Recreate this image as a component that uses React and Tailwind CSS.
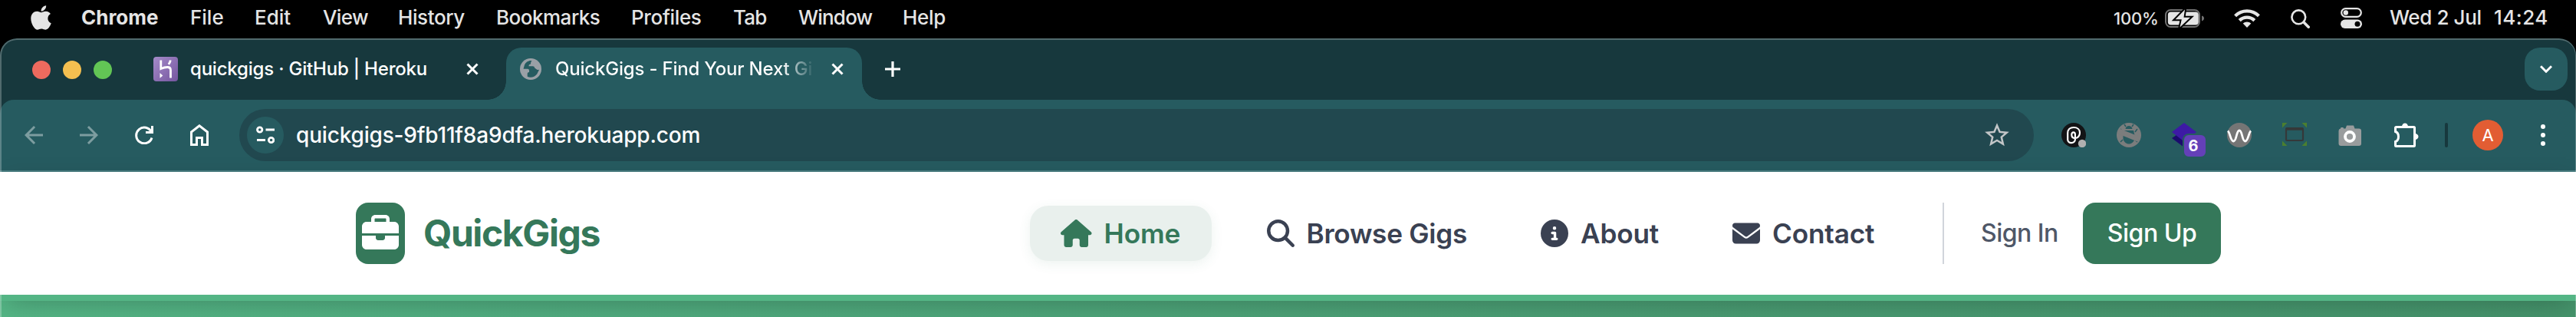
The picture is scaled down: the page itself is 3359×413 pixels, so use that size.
import React from 'react';
import { FaApple } from 'react-icons/fa';
import { FaBriefcase, FaHouse, FaMagnifyingGlass, FaCircleInfo, FaEnvelope } from 'react-icons/fa6';
import { MdArrowBack, MdArrowForward, MdStarBorder } from 'react-icons/md';

function Battery() {
  return (
    <svg className="h-6 w-[51px] shrink-0" viewBox="0 0 51 24" fill="none">
      <rect x="1" y="1" width="44" height="22" rx="6.5" stroke="#727272" strokeWidth="2" />
      <rect x="3.8" y="3.6" width="40" height="16.8" rx="4" fill="#e5e5e5" />
      <path d="M48 8.6c2 .6 3 1.800 3 3.400s-1 2.800-3 3.400z" fill="#727272" />
      <path d="M26 .5L13.500 13.200h8.300L19.500 23.500 33 10.800h-8.500z" fill="#e5e5e5" stroke="#000" strokeWidth="4" />
      <path d="M26 .5L13.500 13.200h8.300L19.500 23.500 33 10.800h-8.500z" fill="#e5e5e5" />
    </svg>
  );
}

function Wifi() {
  return (
    <svg className="h-[25px] w-[34px] shrink-0" viewBox="0 0 34 25" fill="none" stroke="#e5e5e5" strokeWidth="4.300">
      <path d="M1.600 9.700a22 22 0 0 1 30.800 0" />
      <path d="M7.200 15.600a14 14 0 0 1 19.600 0" />
      <path d="M17 25l-5.300-5.400a7.600 7.600 0 0 1 10.600 0z" fill="#e5e5e5" stroke="none" />
    </svg>
  );
}

function ControlCenter() {
  return (
    <svg className="h-[27px] w-7 shrink-0" viewBox="0 0 28 27" fill="none">
      <rect x="1.200" y="1.200" width="25.600" height="10.600" rx="5.300" stroke="#e5e5e5" strokeWidth="2.200" />
      <circle cx="6.800" cy="6.500" r="3.200" fill="#e5e5e5" />
      <rect y="15.500" width="28" height="11.500" rx="5.700" fill="#e5e5e5" />
      <circle cx="22" cy="21.200" r="3.500" fill="#000" />
    </svg>
  );
}

function MenuBar() {
  return (
    <div className="flex h-[50px] items-center bg-black pb-[5px] pl-10 text-[26px] font-medium whitespace-nowrap text-[#e5e5e5]">
      <FaApple className="h-9 w-[27px] shrink-0" />
      <span className="ml-[39px] w-[142px] font-bold">Chrome</span>
      <span className="w-[84px]">File</span>
      <span className="w-[89px]">Edit</span>
      <span className="w-[98px] tracking-[-0.6px]">View</span>
      <span className="w-[128px] tracking-[-0.4px]">History</span>
      <span className="w-[176px] tracking-[-0.5px]">Bookmarks</span>
      <span className="w-[133px] tracking-[-0.35px]">Profiles</span>
      <span className="w-[85px] tracking-[-0.8px]">Tab</span>
      <span className="w-[136px] tracking-[-0.8px]">Window</span>
      <span className="tracking-[-0.3px]">Help</span>
      <div className="ml-auto flex w-[603px] items-center">
        <span className="mt-[3px] w-[67px] text-[22px] tracking-[-0.2px]">100%</span>
        <div className="mt-[3px]"><Battery /></div>
        <div className="mt-[2px] ml-[39px]"><Wifi /></div>
        <svg className="mt-[3px] ml-10 h-[25px] w-[25px] shrink-0" viewBox="0 0 25 25" fill="none" stroke="#e5e5e5">
          <circle cx="10.300" cy="10.300" r="8.900" strokeWidth="2.600" />
          <path d="M17 17l6.200 6.200" strokeWidth="3.600" strokeLinecap="round" />
        </svg>
        <div className="mt-[2px] ml-10"><ControlCenter /></div>
        <span className="ml-9 w-[136px] tracking-[-0.4px]">Wed 2 Jul</span>
        <span className="tracking-[0.5px]">14:24</span>
      </div>
    </div>
  );
}

function Close({ className = '' }) {
  return (
    <svg className={`h-4 w-4 shrink-0 ${className}`} viewBox="0 0 16 16" stroke="#fff" strokeWidth="3" fill="none">
      <path d="M1.500 1.500l13 13M14.500 1.500l-13 13" />
    </svg>
  );
}

function HerokuIcon() {
  return (
    <svg className="ml-[54px] h-8 w-8 shrink-0" viewBox="0 0 32 32" fill="none">
      <defs>
        <linearGradient id="heroku" x1="0" y1="0" x2="1" y2="1">
          <stop offset="0" stopColor="#a58bc9" />
          <stop offset="1" stopColor="#75569f" />
        </linearGradient>
      </defs>
      <rect width="32" height="32" rx="4" fill="url(#heroku)" />
      <path d="M9.800 4.500v11c3-1.300 6-2 8.500-2 3 0 4.200 1.500 4.200 4V27.500" stroke="#fff" strokeWidth="2.800" />
      <path d="M22.300 4.500c-.3 2-1.200 3.700-2.600 5.200" stroke="#fff" strokeWidth="2.800" />
      <path d="M8.500 21l3.800 3.400-3.800 3.300z" fill="#fff" />
    </svg>
  );
}

function TabStrip() {
  return (
    <div className="flex h-[78px] bg-[#17383d] pr-[11px] pl-[42px] text-[24px] font-medium whitespace-nowrap text-white">
      <div className="flex items-center gap-4">
        <span className="h-6 w-6 rounded-full bg-[#ed6a5e]" />
        <span className="h-6 w-6 rounded-full bg-[#f4bf50]" />
        <span className="h-6 w-6 rounded-full bg-[#62c555]" />
      </div>
      <div className="flex items-center pb-[2px]">
        <HerokuIcon />
        <span className="ml-4 w-[360px] tracking-[-0.2px]">quickgigs · GitHub | Heroku</span>
        <Close />
      </div>
      <div className="ml-3 flex items-end">
        <span className="h-6 w-6 bg-[radial-gradient(circle_at_0_0,transparent_23.5px,#265b60_24px)]" />
        <div className="flex h-[68px] w-[464px] items-center rounded-t-[20px] bg-[#265b60] pb-3 pl-[18px]">
          <svg className="h-7 w-7 shrink-0" viewBox="0 0 28 28">
            <circle cx="14" cy="14" r="14" fill="#9aa0a6" />
            <path
              d="M15.500 3C11 2.500 7.500 5 6 8.500L4.500 13.800H10c1.500 0 2 1 2 2v2.200c-1.800 0-2.300 1-2.300 2.500v3.300c4 2.200 9.500.7 12.500-3.300l3-6c-1.800.9-3 .5-4-.5l-2-1.500c-.3-1.500-1-2.200-2.500-2.200H11.500c0-2 .8-2.800 2.500-2.800.2-2 .2-3.300 1.500-4.500z"
              fill="#265b60"
            />
          </svg>
          <span className="ml-[18px] w-[336px] overflow-hidden bg-[linear-gradient(90deg,#fff_296px,transparent_338px)] bg-clip-text tracking-[-0.2px] text-transparent">
            QuickGigs - Find Your Next Gi
          </span>
          <Close className="ml-6" />
        </div>
        <span className="h-6 w-6 bg-[radial-gradient(circle_at_100%_0,transparent_23.5px,#265b60_24px)]" />
      </div>
      <div className="flex grow items-center justify-between pb-[2px] pl-[6px]">
        <svg className="h-5 w-5" viewBox="0 0 20 20" stroke="#fff" strokeWidth="3.200">
          <path d="M10 0v20M0 10h20" />
        </svg>
        <span className="flex h-14 w-14 items-center justify-center rounded-[20px] bg-[#265b60]">
          <svg className="h-[10px] w-4" viewBox="0 0 16 10" fill="none" stroke="#fff" strokeWidth="3">
            <path d="M1 1.200l7 7 7-7" />
          </svg>
        </span>
      </div>
    </div>
  );
}

function Extensions() {
  return (
    <div className="ml-9 flex items-center gap-10">
      <svg className="h-8 w-8" viewBox="0 0 32 32" fill="none">
        <circle cx="16" cy="16" r="16" fill="#131416" />
        <path
          d="M8.200 22V13.500C8.200 8.500 11.500 6 16 6c5 0 8 3 8 7s-2.700 7-6.200 7c-3 0-4.500-2-4.500-4.500 0-2 1-3.200 2.400-3.200s2.200 1 2.200 2.700v6.500c0 6-9.700 6-9.700.5z"
          stroke="#fff"
          strokeWidth="2.200"
        />
        <circle cx="27" cy="27" r="5.200" fill="#b0b0b0" />
      </svg>
      <svg className="h-8 w-8" viewBox="0 0 32 32" fill="none">
        <circle cx="16" cy="16" r="16" fill="#7b7d7d" />
        <path d="M11.500 8c.5-3 2.500-4 4.500-4s4 1 4.500 4zM10 10h12l1.500 6v5c-1 4-4 6.500-7.500 6.500S9.500 25 8.500 21v-5z" fill="#265b60" />
        <path d="M12 5l-2-3M20 5l2-3M8 12L5 8M24 12l3-4M8 22l-3 3M24 22l3 3" stroke="#265b60" strokeWidth="1.500" />
        <path d="M3 11l26 10.500" stroke="#7b7d7d" strokeWidth="7" />
      </svg>
      <div className="relative h-8 w-8">
        <svg className="h-8 w-8" viewBox="0 0 32 32">
          <path d="M0 20l16-11 16 11-16 12z" fill="#1b0b6e" />
          <path d="M0 12L16 0l16 12-16 12.500z" fill="#3d1aa5" />
        </svg>
        <span className="absolute top-[14px] left-[14px] flex h-8 w-8 items-center justify-center rounded-[8px] border-2 border-[#265b60] bg-[#6440b8] pr-1 text-[20px] leading-none font-bold text-white">
          6
        </span>
      </div>
      <svg className="h-8 w-8" viewBox="0 0 32 32" fill="none">
        <circle cx="16" cy="16" r="16" fill="#757575" />
        <path d="M1 10.500C4 13 4.500 24 8.500 24S12 10 16 10s3.500 14 7.500 14S28 13 31 10.500" stroke="#fff" strokeWidth="2.800" />
      </svg>
      <svg className="h-8 w-8" viewBox="0 1 32 32" fill="none">
        <path d="M0 1h6.500L0 7.500zM32 1v6.500L25.500 1zM0 31v-6.500L6.500 31zM32 31h-6.500l6.500-6.500z" fill="#4b7f2f" />
        <rect x="5" y="8" width="22" height="16" rx="1" stroke="#353839" strokeWidth="2.200" />
        <path d="M5 9h22" stroke="#353839" strokeWidth="3.600" />
      </svg>
      <svg className="h-8 w-8" viewBox="0 0 32 32" fill="none">
        <path d="M10.500 7.500l1.500-4h9l1.500 4H28a3 3 0 0 1 3 3V27a3 3 0 0 1-3 3H4.500a3 3 0 0 1-3-3V10.500a3 3 0 0 1 2.500-3l.5-1.500h3l.5 1.500z" fill="#999c9d" />
        <circle cx="16" cy="18" r="6" fill="#999c9d" stroke="#fff" strokeWidth="3.800" />
      </svg>
      <svg className="h-8 w-[34px]" viewBox="-2 0 34 32" fill="none">
        <path
          d="M3 5.500h22.500a1 1 0 0 1 1 1V29.500a1 1 0 0 1-1 1H2.500a1 1 0 0 1-1-1V24.500c2.700-.8 4-3.200 4-6.500s-1.300-5.700-4-6.500V6.500a1 1 0 0 1 1-1z"
          stroke="#fff"
          strokeWidth="3"
        />
        <path d="M10 5a4 4.500 0 0 1 8 0zM27 14a4.500 4 0 0 1 0 8z" fill="#fff" />
      </svg>
    </div>
  );
}

function Toolbar() {
  return (
    <div className="bg-[#17383d]">
      <div className="flex h-[94px] items-center rounded-t-[18px] border-b-2 border-[#4d8084] bg-[#265b60] pl-[26px] text-white">
        <MdArrowBack className="h-9 w-9 text-[#7d9da0]" />
        <MdArrowForward className="ml-9 h-9 w-9 text-[#7d9da0]" />
        <svg className="ml-[42px] h-6 w-6" viewBox="0 0 24 24" fill="none" stroke="#fff" strokeWidth="3">
          <path d="M21.500 8A10.400 10.400 0 1 0 22 15.500" />
          <path d="M22.500 0v8.500H14" />
        </svg>
        <svg className="ml-12 h-7 w-6" viewBox="0 0 24 28" fill="none" stroke="#fff" strokeWidth="3">
          <path d="M1.500 26.500V10L12 1.800 22.500 10v16.500h-7V17.500h-7v9z" />
        </svg>
        <div className="ml-10 flex h-[68px] w-[2340px] shrink-0 items-center rounded-full bg-[#21484f] pr-[29px] pl-[10px]">
          <span className="flex h-12 w-12 items-center justify-center rounded-full bg-[#265b60]">
            <svg className="h-6 w-6" viewBox="0 0 24 24" fill="none" stroke="#fff" strokeWidth="2.800">
              <circle cx="4.700" cy="5" r="3.200" />
              <circle cx="19.600" cy="18.500" r="3.200" />
              <path d="M12.500 5H24M1 18.500h11" />
            </svg>
          </span>
          <span className="ml-4 grow text-[28px] font-[450] tracking-[-0.18px]">quickgigs-9fb11f8a9dfa.herokuapp.com</span>
          <MdStarBorder className="h-[38px] w-[38px] text-[#c2c5c7]" />
        </div>
        <Extensions />
        <span className="ml-[34px] h-8 w-1 rounded-full bg-[#17383d]" />
        <span className="ml-8 flex h-10 w-10 items-center justify-center rounded-full bg-[#e25d33] text-[22px]">A</span>
        <svg className="ml-[49px] h-7 w-[6px]" viewBox="0 0 6 28" fill="#fff">
          <circle cx="3" cy="3" r="3" />
          <circle cx="3" cy="14" r="3" />
          <circle cx="3" cy="25" r="3" />
        </svg>
      </div>
    </div>
  );
}

function SiteHeader() {
  return (
    <header className="relative z-10 flex h-[168px] items-center border-b-8 border-[#54b585] bg-white pl-[464px] text-[35.2px] font-semibold whitespace-nowrap text-[#3a4152] shadow-[0_8px_32px_-8px_rgba(0,0,0,0.26)]">
      <div className="flex w-[879px] shrink-0 items-center gap-6 text-[#35785a]">
        <span className="flex h-20 w-16 items-center justify-center rounded-[16px] bg-[#35785a]">
          <FaBriefcase className="h-12 w-12 text-white" />
        </span>
        <span className="text-[48px] font-bold tracking-[-1.4px]">QuickGigs</span>
      </div>
      <nav className="flex items-center">
        <a className="flex h-[72px] w-[237px] items-center gap-4 rounded-[24px] bg-[#e9f0ed] pl-10 text-[#35785a] shadow-[0_4px_16px_rgba(53,120,90,0.09)]">
          <FaHouse className="h-9 w-[40.5px]" />
          <span className="tracking-[-0.1px]">Home</span>
        </a>
        <a className="ml-[71.5px] flex w-[357.5px] items-center gap-4">
          <FaMagnifyingGlass className="h-9 w-9" />
          <span className="tracking-[-0.3px]">Browse Gigs</span>
        </a>
        <a className="flex w-[250px] items-center gap-4">
          <FaCircleInfo className="h-9 w-9" />
          <span className="tracking-[-0.2px]">About</span>
        </a>
        <a className="flex w-[274px] items-center gap-4">
          <FaEnvelope className="h-9 w-9" />
          <span className="tracking-[-0.2px]">Contact</span>
        </a>
      </nav>
      <div className="flex h-20 items-center border-l-2 border-[#d1d5db] pl-12 text-[32px] font-medium tracking-[-0.5px]">
        <a className="w-[133px] text-[#4f5767]">Sign In</a>
        <a className="flex h-20 w-[180px] items-center justify-center rounded-[16px] bg-[#35785a] text-white">Sign Up</a>
      </div>
    </header>
  );
}

export default function App() {
  return (
    <div className="h-[413px] w-[3359px] overflow-hidden bg-black font-['Inter',sans-serif]">
      <MenuBar />
      <div className="relative h-[363px] overflow-hidden rounded-t-[22px] bg-[#17383d] pt-[2px]">
        <TabStrip />
        <Toolbar />
        <SiteHeader />
        <div className="h-[21px] bg-[linear-gradient(90deg,#54b585_0px,#50ac7f_700px,#4ca277_1600px,#499b72_2200px,#45936b_3359px)]" />
        <div className="pointer-events-none absolute inset-0 z-20 rounded-t-[22px] border-t-2 border-r border-l-2 border-white/25" />
      </div>
    </div>
  );
}
